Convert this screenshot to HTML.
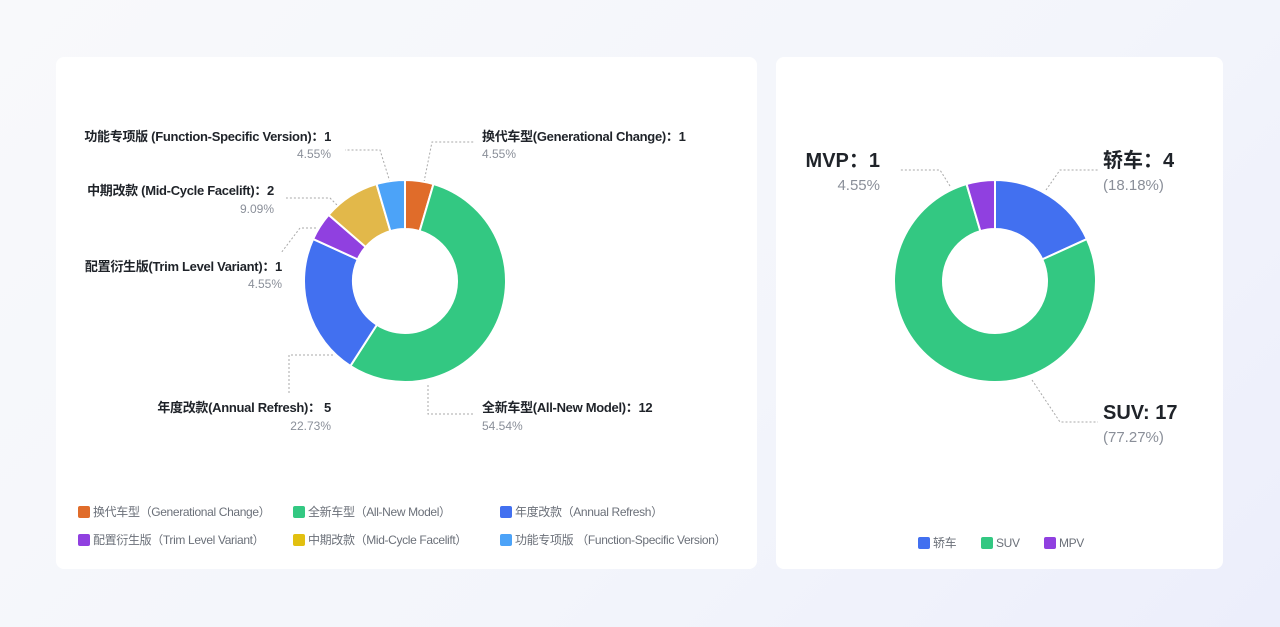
<!DOCTYPE html>
<html><head><meta charset="utf-8">
<style>
*{margin:0;padding:0;box-sizing:border-box}
body{width:1280px;height:627px;overflow:hidden;background:linear-gradient(135deg,#f8f9fb 0%,#f3f5fb 60%,#eceefb 100%);font-family:"Liberation Sans","Noto Sans CJK SC",sans-serif;position:relative}
.card{position:absolute;background:#fff;border-radius:8px;top:57px;height:512px}
svg{position:absolute;left:0;top:0}
.t{position:absolute;white-space:nowrap;color:#1f2329;font-weight:bold;font-size:13px;line-height:16px;letter-spacing:-0.3px}
.p{position:absolute;white-space:nowrap;color:#8a8f99;font-size:12px;line-height:14px}
.r{transform:translateX(-100%)}
.big{font-size:20px;line-height:24px;letter-spacing:0}
.pb{font-size:15px;line-height:18px}
.lg{position:absolute;font-size:12px;color:#6b7079;white-space:nowrap;line-height:14px;letter-spacing:-0.35px}
.lg i{display:inline-block;width:12px;height:12px;border-radius:2px;vertical-align:-2px;margin-right:3px}
</style></head><body>
<div class="card" style="left:56px;width:701px"></div>
<div class="card" style="left:776px;width:447px"></div>
<svg width="1280" height="627" id="s">
<g fill="none" stroke="#aaa" stroke-width="1" stroke-dasharray="2,2">
<polyline points="390,182 380,150 345,150"/>
<polyline points="424,182 432,142 475,142"/>
<polyline points="337,205 330,198 286,198"/>
<polyline points="316,228 300,228 281,253"/>
<polyline points="333,355 289,355 289,395"/>
<polyline points="428,385 428,414 475,414"/>
<polyline points="950,186 940,170 900,170"/>
<polyline points="1046,190 1060,170 1098,170"/>
<polyline points="1032,380 1060,422 1098,422"/>
</g>
</svg>
<div class="t r" style="left:331px;top:129px">功能专项版 (Function-Specific Version)：1</div>
<div class="p r" style="left:331px;top:147px">4.55%</div>
<div class="t" style="left:482px;top:129px">换代车型(Generational Change)：1</div>
<div class="p" style="left:482px;top:147px">4.55%</div>
<div class="t r" style="left:274px;top:183px">中期改款 (Mid-Cycle Facelift)：2</div>
<div class="p r" style="left:274px;top:202px">9.09%</div>
<div class="t r" style="left:282px;top:259px">配置衍生版(Trim Level Variant)：1</div>
<div class="p r" style="left:282px;top:277px">4.55%</div>
<div class="t r" style="left:331px;top:400px">年度改款(Annual Refresh)： 5</div>
<div class="p r" style="left:331px;top:419px">22.73%</div>
<div class="t" style="left:482px;top:400px">全新车型(All-New Model)：12</div>
<div class="p" style="left:482px;top:419px">54.54%</div>

<div class="t big r" style="left:880px;top:149px">MVP：1</div>
<div class="p pb r" style="left:880px;top:177px">4.55%</div>
<div class="t big" style="left:1103px;top:149px">轿车：4</div>
<div class="p pb" style="left:1103px;top:177px">(18.18%)</div>
<div class="t big" style="left:1103px;top:401px">SUV: 17</div>
<div class="p pb" style="left:1103px;top:429px">(77.27%)</div>

<div class="lg" style="left:78px;top:505px"><i style="background:#e06c2a"></i>换代车型（Generational Change）</div>
<div class="lg" style="left:293px;top:505px"><i style="background:#33c882"></i>全新车型（All-New Model）</div>
<div class="lg" style="left:500px;top:505px"><i style="background:#4270f0"></i>年度改款（Annual Refresh）</div>
<div class="lg" style="left:78px;top:533px"><i style="background:#9040e0"></i>配置衍生版（Trim Level Variant）</div>
<div class="lg" style="left:293px;top:533px"><i style="background:#e2c010"></i>中期改款（Mid-Cycle Facelift）</div>
<div class="lg" style="left:500px;top:533px"><i style="background:#4ca3f8"></i>功能专项版 （Function-Specific Version）</div>

<div class="lg" style="left:918px;top:536px"><i style="background:#4270f0"></i>轿车</div>
<div class="lg" style="left:981px;top:536px"><i style="background:#33c882"></i>SUV</div>
<div class="lg" style="left:1044px;top:536px"><i style="background:#9040e0"></i>MPV</div>

<script>
function donut(cx,cy,R,r,vals,cols){
  var s=document.getElementById('s'),tot=vals.reduce((a,b)=>a+b,0),a=-Math.PI/2;
  vals.forEach(function(v,i){
    var b=a+v/tot*2*Math.PI,l=(b-a)>Math.PI?1:0;
    function P(rad,ang){return (cx+rad*Math.cos(ang)).toFixed(2)+','+(cy+rad*Math.sin(ang)).toFixed(2)}
    var d='M'+P(R,a)+'A'+R+','+R+' 0 '+l+' 1 '+P(R,b)+'L'+P(r,b)+'A'+r+','+r+' 0 '+l+' 0 '+P(r,a)+'Z';
    var p=document.createElementNS('http://www.w3.org/2000/svg','path');
    p.setAttribute('d',d);p.setAttribute('fill',cols[i]);p.setAttribute('stroke','#fff');p.setAttribute('stroke-width','2');
    s.appendChild(p);a=b;
  });
}
donut(405,281,101,52,[1,12,5,1,2,1],['#e06c2a','#33c882','#4270f0','#9040e0','#e2b84a','#4ca3f8']);
donut(995,281,101,52,[4,17,1],['#4270f0','#33c882','#9040e0']);
</script>
</body></html>
